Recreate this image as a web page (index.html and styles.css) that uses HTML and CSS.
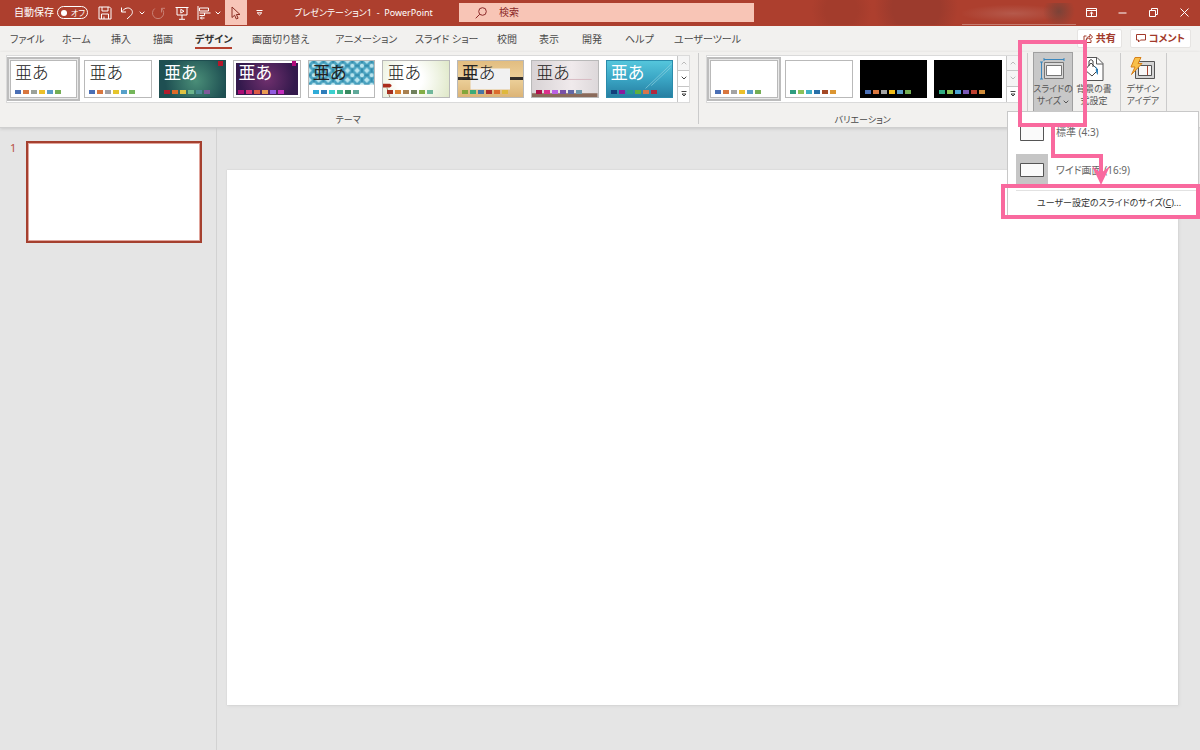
FILE: index.html
```html
<!DOCTYPE html>
<html lang="ja">
<head>
<meta charset="utf-8">
<meta name="viewport" content="width=device-width, initial-scale=1">
<title>プレゼンテーション1 - PowerPoint</title>
<link rel="stylesheet" href="styles.css">
</head>
<body>
<header class="titlebar">
  <label class="autosave">自動保存<span class="pill"><input type="checkbox" class="pill-dot"><span>オフ</span></span></label>
  <div class="quick">
    <button class="q-btn w22" aria-label="保存"><svg width="14" height="14" viewBox="0 0 14 14"><path d="M1 1h10.500L13 2.500V13H1zM4 1v4h6V1M3.500 13V8h7v5M6 13v-2.500"/></svg></button>
    <button class="q-btn w22" aria-label="元に戻す"><svg width="14" height="14" viewBox="0 0 14 14"><path d="M1.500 1.500v4.500h4.500M1.800 5.700C4 2.500 8 .8 10.800 3c2.500 2 1.800 5-.3 6.800L7 13"/></svg></button>
    <button class="q-btn w8" aria-label="元に戻すの履歴"><svg width="6" height="4" viewBox="0 0 6 4"><path d="M.7.700 3 3 5.300.700"/></svg></button>
    <button class="q-btn w24 faded" aria-label="繰り返し"><svg width="14" height="14" viewBox="0 0 14 14"><path d="M3.800 2.500A5.600 5.600 0 1 0 10.500 2.600M10.500 6.500V2.300h3.500"/></svg></button>
    <button class="q-btn w24" aria-label="最初から開始"><svg width="14" height="14" viewBox="0 0 14 14"><path d="M.5 1.500h13M2 1.500v7.500h10V1.500M7 9v4M4 13.300h6M5.800 3.300v3.800L9 5.200z"/></svg></button>
    <button class="q-btn w20" aria-label="配置"><svg width="14" height="14" viewBox="0 0 14 14"><path d="M1 0v14M2.500 2h9v3h-9zM2.500 7h11M2.500 9.500h5v-2.500M3.500 12h4M5 10.500 3.500 12 5 13.500"/></svg></button>
    <button class="q-btn w8" aria-label="配置のオプション"><svg width="6" height="4" viewBox="0 0 6 4"><path d="M.7.700 3 3 5.300.700"/></svg></button>
    <button class="q-btn w22 picked" aria-label="オブジェクトの選択"><svg width="10" height="14" viewBox="0 0 10 14"><path d="M1 1v10.500l2.600-2.300 1.700 3.800 1.800-.8-1.700-3.700H9z"/></svg></button>
    <button class="q-btn w24" aria-label="カスタマイズ"><svg width="7" height="6" viewBox="0 0 7 6"><path d="M.5.500h6M1.200 2.800h4.600L3.500 5z"/></svg></button>
  </div>
  <h1 class="doc-title">プレゼンテーション1&nbsp; -&nbsp; PowerPoint</h1>
  <div class="search">
    <svg width="12" height="12" viewBox="0 0 12 12"><circle cx="7.500" cy="4.500" r="3.800"/><path d="M4.700 7.300.700 11.300"/></svg>
    <input type="search" placeholder="検索" aria-label="検索">
  </div>
  <div class="title-fill"></div>
  <div class="user-chip"></div>
  <div class="window-controls">
    <button aria-label="リボンの表示オプション"><svg width="11" height="9" viewBox="0 0 11 9"><path d="M.5.500h10v8H.5zM.5 2.500h10M5.500 8V4.200M3.700 5.800l1.800-1.700 1.800 1.700"/></svg></button>
    <button aria-label="最小化"><svg width="9" height="9" viewBox="0 0 9 9"><path d="M.5 5h8"/></svg></button>
    <button aria-label="元のサイズに戻す"><svg width="9" height="9" viewBox="0 0 9 9"><path d="M.5 2.500h6v6h-6zM2.500 2.500v-2h6v6h-2"/></svg></button>
    <button aria-label="閉じる"><svg width="9" height="9" viewBox="0 0 9 9"><path d="m.5.500 8 8M8.500.500l-8 8"/></svg></button>
  </div>
</header>

<nav class="tabs">
  <div class="tab-list">
    <button>ファイル</button><button>ホーム</button><button>挿入</button><button>描画</button><button class="active"><span>デザイン</span></button><button>画面切り替え</button><button>アニメーション</button><button>スライド ショー</button><button>校閲</button><button>表示</button><button>開発</button><button>ヘルプ</button><button>ユーザーツール</button>
  </div>
  <div class="tab-actions">
    <button class="action"><svg width="10" height="10" viewBox="0 0 10 10"><path d="M3.500 3H1v6.500h7V7M3.200 7C3.400 4.500 5 3.400 7 3.400V1.200L9.500 4 7 6.600V5C5.300 5 4.200 5.500 3.200 7z"/></svg>共有</button>
    <button class="action"><svg width="10" height="9" viewBox="0 0 10 9"><path d="M.5.500h9v5.500h-5L2.500 8V6h-2z"/></svg>コメント</button>
  </div>
</nav>

<section class="ribbon">
  <div class="group themes">
    <div class="gallery">
      <div class="thumbs nine">
        <button class="thumb selected"><span class="sample">亜あ</span><svg class="swatches" viewBox="0 0 46 4"><path fill="#4a6fb5" d="M0 0h6v4H0z"/><path fill="#d9773f" d="M8 0h6v4H8z"/><path fill="#9ba199" d="M16 0h6v4h-6z"/><path fill="#ebc02a" d="M24 0h6v4h-6z"/><path fill="#5b9bc9" d="M32 0h6v4h-6z"/><path fill="#74ae54" d="M40 0h6v4h-6z"/></svg></button>
        <button class="thumb"><span class="sample">亜あ</span><svg class="swatches" viewBox="0 0 46 4"><path fill="#4a6fb5" d="M0 0h6v4H0z"/><path fill="#d9773f" d="M8 0h6v4H8z"/><path fill="#9fa0a6" d="M16 0h6v4h-6z"/><path fill="#e5c52c" d="M24 0h6v4h-6z"/><path fill="#56a0c9" d="M32 0h6v4h-6z"/><path fill="#74b65a" d="M40 0h6v4h-6z"/></svg></button>
        <button class="thumb t-ion"><span class="sample">亜あ</span><svg class="swatches" viewBox="0 0 46 4"><path fill="#b01c2c" d="M0 0h6v4H0z"/><path fill="#dd6a28" d="M8 0h6v4H8z"/><path fill="#dfc242" d="M16 0h6v4h-6z"/><path fill="#6bb58c" d="M24 0h6v4h-6z"/><path fill="#4b8c96" d="M32 0h6v4h-6z"/><path fill="#80599a" d="M40 0h6v4h-6z"/></svg></button>
        <button class="thumb t-board"><span class="sample">亜あ</span><svg class="swatches" viewBox="0 0 46 4"><path fill="#a80d74" d="M0 0h6v4H0z"/><path fill="#d83279" d="M8 0h6v4H8z"/><path fill="#dd5b45" d="M16 0h6v4h-6z"/><path fill="#e99b51" d="M24 0h6v4h-6z"/><path fill="#925be0" d="M32 0h6v4h-6z"/><path fill="#c42dbb" d="M40 0h6v4h-6z"/></svg></button>
        <button class="thumb t-pattern"><svg class="art" viewBox="0 0 68 38" preserveAspectRatio="none"><defs><pattern id="lattice" width="10" height="10" patternUnits="userSpaceOnUse"><rect width="10" height="10" fill="#4aa3c1"/><path d="m0-3 3 3-3 3-3-3zM10-3l3 3-3 3-3-3zM0 7l3 3-3 3-3-3zM10 7l3 3-3 3-3-3zM5 2l3 3-3 3-3-3z" fill="#b9e4ee"/><path d="M5 0v10M0 5h10" stroke="#1d7799" stroke-dasharray="3 4"/></pattern></defs><rect width="68" height="25" fill="url(#lattice)"/></svg><span class="sample">亜あ</span><svg class="swatches" viewBox="0 0 46 4"><path fill="#2eabd8" d="M0 0h6v4H0z"/><path fill="#2e7dba" d="M8 0h6v4H8z"/><path fill="#3cd0cf" d="M16 0h6v4h-6z"/><path fill="#45b990" d="M24 0h6v4h-6z"/><path fill="#388a60" d="M32 0h6v4h-6z"/><path fill="#60a99a" d="M40 0h6v4h-6z"/></svg></button>
        <button class="thumb t-wisp"><svg class="art" viewBox="0 0 68 38" preserveAspectRatio="none"><path d="M0 24h7q4 2 0 4H0z" fill="#ab2c1c"/><path d="m4 28 3 10" stroke="#9c8a70"/></svg><span class="sample">亜あ</span><svg class="swatches" viewBox="0 0 46 4"><path fill="#a6301f" d="M0 0h6v4H0z"/><path fill="#d98131" d="M8 0h6v4H8z"/><path fill="#a8804f" d="M16 0h6v4h-6z"/><path fill="#6f805b" d="M24 0h6v4h-6z"/><path fill="#83ad45" d="M32 0h6v4h-6z"/><path fill="#70b89b" d="M40 0h6v4h-6z"/></svg></button>
        <button class="thumb t-wood"><svg class="art" viewBox="0 0 68 38" preserveAspectRatio="none"><path d="M0 17h68v3H0z" fill="#332f2b"/><path d="M13 8h41v22H13z" fill="#f1f1f1"/></svg><span class="sample">亜<span class="thin">あ</span></span><svg class="swatches" viewBox="0 0 46 4"><path fill="#83a63b" d="M0 0h6v4H0z"/><path fill="#3cab78" d="M8 0h6v4H8z"/><path fill="#4776a5" d="M16 0h6v4h-6z"/><path fill="#ad2d2b" d="M24 0h6v4h-6z"/><path fill="#dc6c2c" d="M32 0h6v4h-6z"/><path fill="#dfb83c" d="M40 0h6v4h-6z"/></svg></button>
        <button class="thumb t-gallery"><svg class="art" viewBox="0 0 68 38" preserveAspectRatio="none"><path d="M5 19.500h57" stroke="#d7b9c2"/><path d="M0 34h68v4H0z" fill="#8a6a5a"/></svg><span class="sample">亜あ</span><svg class="swatches" viewBox="0 0 46 4"><path fill="#ae124c" d="M0 0h6v4H0z"/><path fill="#db308b" d="M8 0h6v4H8z"/><path fill="#ba60e3" d="M16 0h6v4h-6z"/><path fill="#7950a6" d="M24 0h6v4h-6z"/><path fill="#6368a6" d="M32 0h6v4h-6z"/><path fill="#6e98ab" d="M40 0h6v4h-6z"/></svg></button>
        <button class="thumb t-slice"><svg class="art" viewBox="0 0 68 38" preserveAspectRatio="none"><path d="M40 29 68 2M46 26 66 7" stroke="#8fd0df" stroke-width=".7"/></svg><span class="sample">亜あ</span><svg class="swatches" viewBox="0 0 46 4"><path fill="#123e7b" d="M0 0h6v4H0z"/><path fill="#8a1b9c" d="M8 0h6v4H8z"/><path fill="#259b8f" d="M16 0h6v4h-6z"/><path fill="#5faf3d" d="M24 0h6v4h-6z"/><path fill="#d7754b" d="M32 0h6v4h-6z"/><path fill="#b0283e" d="M40 0h6v4h-6z"/></svg></button>
      </div>
      <div class="scroller">
        <button aria-label="上へ" disabled><svg width="6" height="4" viewBox="0 0 6 4"><path d="M.7 3.300 3 1l2.300 2.300"/></svg></button>
        <button aria-label="下へ"><svg width="6" height="4" viewBox="0 0 6 4"><path d="M.7.700 3 3 5.300.700"/></svg></button>
        <button aria-label="その他"><svg width="6" height="6" viewBox="0 0 6 6"><path d="M.5.500h5M1 3h4L3 5z"/></svg></button>
      </div>
    </div>
    <div class="group-name">テーマ</div>
  </div>
  <div class="rule"></div>
  <div class="group variants">
    <div class="gallery">
      <div class="thumbs four">
        <button class="thumb selected" aria-label="バリエーション 1"><svg class="swatches" viewBox="0 0 46 4"><path fill="#4a6fb5" d="M0 0h6v4H0z"/><path fill="#d9773f" d="M8 0h6v4H8z"/><path fill="#a3a3a3" d="M16 0h6v4h-6z"/><path fill="#ebc02a" d="M24 0h6v4h-6z"/><path fill="#5b9bc9" d="M32 0h6v4h-6z"/><path fill="#74ae54" d="M40 0h6v4h-6z"/></svg></button>
        <button class="thumb" aria-label="バリエーション 2"><svg class="swatches" viewBox="0 0 46 4"><path fill="#2f9d7f" d="M0 0h6v4H0z"/><path fill="#8cc158" d="M8 0h6v4H8z"/><path fill="#3eaec3" d="M16 0h6v4h-6z"/><path fill="#2870a9" d="M24 0h6v4h-6z"/><path fill="#a44825" d="M32 0h6v4h-6z"/><path fill="#db9531" d="M40 0h6v4h-6z"/></svg></button>
        <button class="thumb t-black" aria-label="バリエーション 3"><svg class="swatches" viewBox="0 0 46 4"><path fill="#4a6fb5" d="M0 0h6v4H0z"/><path fill="#d9773f" d="M8 0h6v4H8z"/><path fill="#a3a3a3" d="M16 0h6v4h-6z"/><path fill="#f0bc18" d="M24 0h6v4h-6z"/><path fill="#5b9bc9" d="M32 0h6v4h-6z"/><path fill="#74ae54" d="M40 0h6v4h-6z"/></svg></button>
        <button class="thumb t-black" aria-label="バリエーション 4"><svg class="swatches" viewBox="0 0 46 4"><path fill="#30ac83" d="M0 0h6v4H0z"/><path fill="#8dc353" d="M8 0h6v4H8z"/><path fill="#4aa2d1" d="M16 0h6v4h-6z"/><path fill="#7957b5" d="M24 0h6v4h-6z"/><path fill="#bd4030" d="M32 0h6v4h-6z"/><path fill="#d08b38" d="M40 0h6v4h-6z"/></svg></button>
      </div>
      <div class="scroller">
        <button aria-label="上へ" disabled><svg width="6" height="4" viewBox="0 0 6 4"><path d="M.7 3.300 3 1l2.300 2.300"/></svg></button>
        <button aria-label="下へ" disabled><svg width="6" height="4" viewBox="0 0 6 4"><path d="M.7.700 3 3 5.300.700"/></svg></button>
        <button aria-label="その他"><svg width="6" height="6" viewBox="0 0 6 6"><path d="M.5.500h5M1 3h4L3 5z"/></svg></button>
      </div>
    </div>
    <div class="group-name">バリエーション</div>
  </div>
  <div class="rule"></div>
  <div class="customize">
    <div class="menu-anchor">
      <button class="big pressed" aria-expanded="true">
        <svg width="26" height="24" viewBox="0 0 26 24" fill="none"><path d="M4 2.500h20M4 1v3M24 1v3M1.500 5v17M0 5h3M0 22h3" stroke="#3b87bd"/><path d="M4.500 5.500h19v16h-19z" fill="#d9d9d9" stroke="#777"/><path d="M6.500 8.500h15v10h-15z" fill="#fff" stroke="#777"/></svg>
        <span>スライドの<br>サイズ <svg width="6" height="4" viewBox="0 0 6 4" fill="none" stroke="#555"><path d="M.7.700 3 3 5.300.700"/></svg></span>
      </button>
      <div class="size-menu" role="menu">
        <button class="size-item" role="menuitem"><span class="size-icon"><svg width="24" height="18" viewBox="0 0 24 18"><path d="M.5.500h23v17H.5z" fill="#fafafa" stroke="#555"/></svg></span>標準 (4:3)</button>
        <button class="size-item current" role="menuitem"><span class="size-icon"><svg width="24" height="14" viewBox="0 0 24 14"><path d="M.5.500h23v13H.5z" fill="#fafafa" stroke="#555"/></svg></span>ワイド画面 (16:9)</button>
        <button class="size-custom" role="menuitem">ユーザー設定のスライドのサイズ(<u>C</u>)...</button>
      </div>
      <div class="mark mark-button"></div>
      <div class="mark mark-item"></div>
      <svg class="mark-arrow" width="60" height="60" viewBox="0 0 60 60"><path d="M4 0v30h48v20" fill="none" stroke="#f9699e" stroke-width="4"/><path d="m43 40 9 7 9-7-9 19z" fill="#f9699e"/></svg>
    </div>
    <button class="big"><svg width="26" height="24" viewBox="0 0 26 24" fill="none"><path d="M4.500.500H16l6 6v17H4.500z" fill="#fff" stroke="#555"/><path d="M15.500.500v6.500H22" stroke="#555"/><path d="m4 13 6-7 7 7-6 6z" fill="#fff" stroke="#444"/><path d="M8 9V4q2-3 4 0v6" stroke="#444"/><path d="M13 9q5 1 4 9-3-3-2-7z" fill="#2e83bd"/></svg><span>背景の書<br>式設定</span></button>
  </div>
  <div class="rule"></div>
  <div class="designer">
    <button class="big"><svg width="26" height="24" viewBox="0 0 26 24" fill="none"><path d="M5.500 4.500h19v17h-19z" fill="#d4d4d4" stroke="#555"/><path d="M8.500 8.500h13v10h-13z" fill="#f7f7f7" stroke="#555"/><path d="M17.500 9v9" stroke="#a8442f"/><path d="M5 .5h6L8 6.500h4L1.500 17.500 5 10H1z" fill="#f8c04b" stroke="#d78019"/></svg><span>デザイン<br>アイデア</span></button>
  </div>
  <div class="rule"></div>
</section>

<main class="workspace">
  <aside class="slides">
    <span class="slide-no">1</span>
    <button class="slide-thumb" aria-label="スライド 1"></button>
  </aside>
  <div class="stage"><div class="slide"></div></div>
</main>
</body>
</html>
```
FILE: styles.css
```css
* { box-sizing: border-box; }
body {
  margin: 0;
  min-height: 100vh;
  display: flex;
  flex-direction: column;
  background: #e5e5e5;
  color: #4a4a4a;
  font: 10px/13px "Noto Sans", "Noto Sans CJK JP", sans-serif;
  font-feature-settings: "palt";
  overflow-x: hidden;
}
button, input { font: inherit; font-feature-settings: inherit; color: inherit; }
button { margin: 0; padding: 0; border: 0; background: none; white-space: nowrap; }
svg { flex: none; }

.titlebar {
  display: flex;
  align-items: center;
  height: 26px;
  padding: 0 0 1px 14px;
  background: #ad3f2e;
  color: #fff;
}
.titlebar svg { fill: none; stroke: currentColor; }
.autosave { display: flex; align-items: center; gap: 3px; font-feature-settings: normal; white-space: nowrap; }
.pill {
  display: flex;
  align-items: center;
  gap: 4px;
  width: 31px;
  height: 13px;
  padding-left: 3px;
  border: 1px solid #fff;
  border-radius: 7px;
  font-size: 8px;
  font-feature-settings: "palt";
}
.pill-dot { appearance: none; width: 6px; height: 6px; margin: 0; border-radius: 50%; background: #fff; }
.quick { display: flex; align-self: stretch; margin-left: 6px; }
.q-btn { display: flex; align-items: center; justify-content: center; color: #fff; }
.w8 { width: 8px; }
.w20 { width: 20px; }
.w22 { width: 22px; }
.w24 { width: 24px; }
.faded { opacity: .35; }
.picked { margin-left: 3px; background: #f7c5b8; color: #8a2c22; }
.doc-title { width: 165px; margin: 0 0 0 23px; font-size: 9px; font-weight: 400; white-space: nowrap; }
.search {
  display: flex;
  align-items: center;
  gap: 12px;
  flex: 0 1 295px;
  height: 19px;
  padding-left: 16px;
  background: #f8c5b6;
  color: #8c2a2a;
}
.search input { flex: 1; min-width: 0; padding: 0; border: 0; outline: 0; background: none; }
.search input::placeholder { color: #8c2a2a; opacity: 1; }
.title-fill {
  flex: 1;
  align-self: stretch;
  background: radial-gradient(circle at 42% 40%, #a33c2c 0 16px, transparent 30px), radial-gradient(circle at 78% 30%, #9c3b2d 0 24px, transparent 42px);
}
.user-chip {
  width: 114px;
  height: 22px;
  margin-bottom: -2px;
  border-bottom: 1px solid #c47c70;
  background: radial-gradient(circle at 85% 40%, #7b4237 0, transparent 16px), radial-gradient(ellipse at 45% 50%, #b5594b 0, transparent 60%);
}
.window-controls { display: flex; align-self: stretch; }
.window-controls button { width: 31px; display: flex; align-items: center; justify-content: center; }

.tabs { display: flex; justify-content: space-between; align-items: center; height: 26px; background: #f2f1ef; }
.tab-list {
  display: grid;
  grid-template-columns: 52px 49px 42px 42px 57px 83px 80px 82px 42px 43px 43px 49px 70px;
  padding-left: 10px;
}
.tab-list button { text-align: left; font-size: 10px; line-height: 16px; }
.tab-list .active { font-weight: 700; color: #333; }
.active span { display: inline-block; border-bottom: 2px solid #b4402f; margin-top: 2px; }
.tab-actions { display: flex; gap: 8px; padding: 0 9px 2px 0; }
.action {
  display: flex;
  align-items: center;
  justify-content: center;
  gap: 3px;
  height: 19px;
  padding: 0 5px;
  border: 1px solid #e6e4e2;
  border-radius: 2px;
  background: #fff;
  color: #a23a2b;
  font-weight: 700;
}
.action svg { fill: none; stroke: currentColor; }

.ribbon {
  display: flex;
  height: 76px;
  padding: 0 33px 0 6px;
  background: #f2f1ef;
  border-bottom: 1px solid #cfcfcf;
  box-shadow: 0 1px 3px #c8c8c8;
  position: relative;
}
.group { display: flex; flex-direction: column; justify-content: space-between; padding-top: 3px; min-width: 0; }
.themes { flex: 9 1 685px; margin-right: 8px; }
.variants { flex: 4 1 313px; margin: 0 8px 0 7px; }
.group-name { text-align: center; font-size: 9px; line-height: 14px; }
.rule { width: 1px; margin: 1px 0 3px; background: #cbcbcb; }
.gallery { display: flex; height: 48px; border: 1px solid #dadada; background: #fff; }
.thumbs { flex: 1; display: grid; gap: 7px; padding: 4px 4px 4px 3px; }
.nine { grid-template-columns: repeat(9, 1fr); }
.four { grid-template-columns: repeat(4, 1fr); }
.thumb { position: relative; height: 38px; border: 1px solid #b9b9b9; background: #fff; color: #222; text-align: left; }
.selected { box-shadow: 0 0 0 1px #e9e9e9, 0 0 0 3px #bdbdbd; }
.sample { position: absolute; left: 4px; top: 1px; font-size: 17px; line-height: 21px; font-weight: 300; }
.thin { font-weight: 100; }
.swatches { position: absolute; left: 4px; bottom: 3px; width: 46px; height: 4px; }
.art { position: absolute; inset: 0; width: 100%; height: 100%; }
.t-ion { border-color: #1f4e50; background: linear-gradient(#b5162b, #b5162b) 58px 0 / 5px 5px no-repeat, radial-gradient(circle at 55% 55%, #4a8e78, #1e4f52 75%); color: #fff; }
.t-board { background: linear-gradient(#b20a7c, #b20a7c) 58px 0 / 4px 5px no-repeat, radial-gradient(circle at 50% 50%, #70306e, #33194c 80%) 2px 2px / calc(100% - 4px) calc(100% - 4px) no-repeat #fff; color: #fff; }
.t-wisp { background: radial-gradient(circle at 40% 50%, #fff 30%, #dfe8c8); }
.t-wood { background: linear-gradient(#e2bd80, #ecd09a 50%, #dcb476); }
.t-wood .sample, .t-ion .sample, .t-board .sample, .t-slice .sample, .t-pattern .sample { font-weight: 400; }
.t-wood .thin { font-weight: 300; }
.t-gallery { background: linear-gradient(90deg, #d8d3d5, #f0eaec 60%, #ddd8da); }
.t-slice { border-color: #2a8bab; background: linear-gradient(#55c6dc, #3aa5c4 50%, #277fa2); color: #fff; }
.t-black { border-color: #000; background: #000; }
.scroller { width: 12px; display: grid; grid-template-rows: repeat(3, 1fr); border-left: 1px solid #c6c6c6; }
.scroller button { display: flex; align-items: center; justify-content: center; color: #444; border-bottom: 1px solid #c6c6c6; }
.scroller button:last-child { border-bottom: 0; }
.scroller button:disabled { color: #bbb; background: #f5f5f5; }
.scroller svg { fill: none; stroke: currentColor; }

.customize { display: flex; padding: 0 6px 0 5px; }
.designer { padding: 0 5px 0 4px; }
.big { display: flex; flex-direction: column; align-items: center; gap: 2px; width: 40px; height: 60px; padding-top: 4px; border: 1px solid transparent; font-size: 9px; line-height: 12px; color: #555; }
.designer .big { width: 36px; }
.pressed { background: #c8c8c8; border-color: #a0a0a0; }
.menu-anchor { position: relative; margin-right: 1px; }
.size-menu {
  position: absolute;
  z-index: 2;
  top: 59px;
  left: -26px;
  width: 192px;
  height: 106px;
  padding: 4px 2px 0 8px;
  border: 1px solid #c8c8c8;
  background: #fff;
  color: #666;
}
.size-item { display: flex; align-items: center; gap: 8px; width: 100%; height: 32px; margin-bottom: 6px; }
.size-icon { display: flex; align-items: center; justify-content: center; width: 32px; height: 32px; }
.current { margin-bottom: 4px; }
.current .size-icon { background: #c6c6c6; }
.size-custom { display: block; width: 100%; height: 24px; padding-left: 21px; text-align: left; border-top: 1px solid #e2e2e2; font-size: 9px; color: #333; }
.mark { position: absolute; z-index: 3; border: 4px solid #f9699e; pointer-events: none; }
.mark-button { left: -15px; top: -12px; width: 69px; height: 87px; }
.mark-item { left: -32px; top: 132px; width: 199px; height: 35px; }
.mark-arrow { position: absolute; z-index: 3; left: 16px; top: 74px; overflow: visible; pointer-events: none; }

.workspace { flex: 1; display: flex; }
.slides { display: flex; align-items: flex-start; flex: none; width: 217px; padding: 13px 14px 0 10px; border-right: 1px solid #d2d2d2; }
.slide-no { width: 16px; color: #b8503f; font-size: 11px; line-height: 14px; }
.slide-thumb { flex: 1; aspect-ratio: 176 / 102; border: 2px solid #a5402f; outline: 1px solid #e0a49b; outline-offset: -3px; background: #fff; }
.stage { flex: 1; padding: 42px 22px 44px 10px; }
.slide { aspect-ratio: 16 / 9; background: #fff; box-shadow: 0 0 1px #c4c4c4, 1px 1px 3px #d5d5d5; }
```
